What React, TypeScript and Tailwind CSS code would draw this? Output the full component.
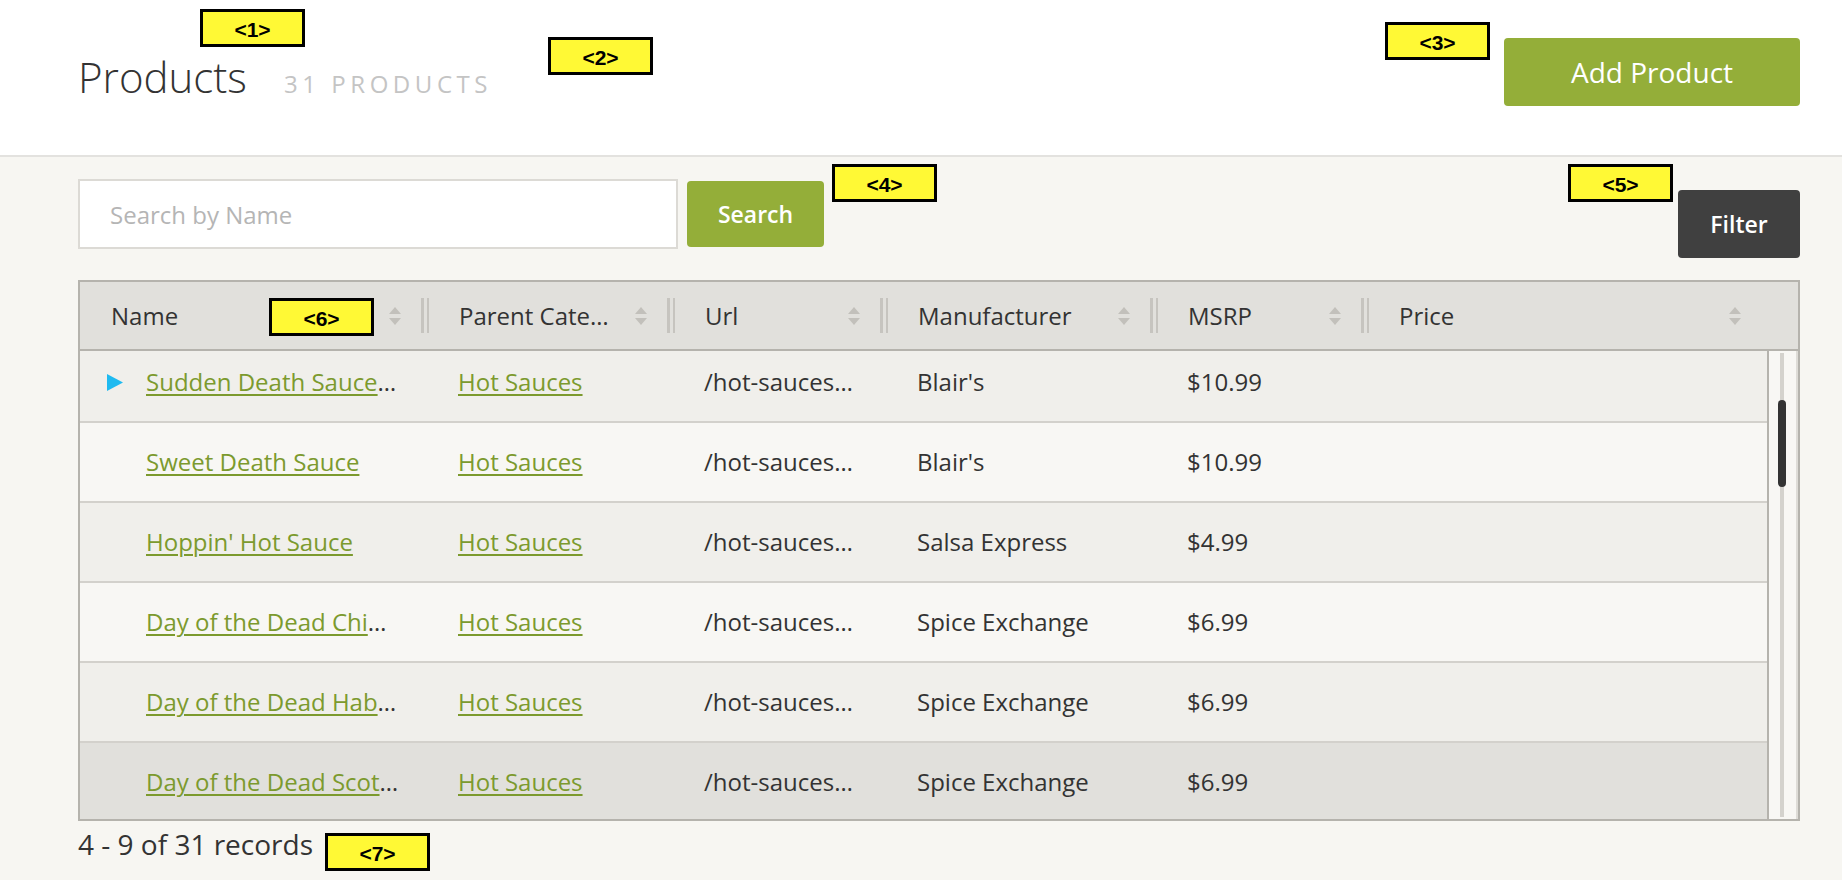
import React from 'react';

interface Product {
  name: string;
  category: string;
  url: string;
  manufacturer: string;
  msrp: string;
  price: string;
}

const products: Product[] = [
  { name: 'Sudden Death Sauce - Limited Batch', category: 'Hot Sauces', url: '/hot-sauces/sudden-death-sauce', manufacturer: "Blair's", msrp: '$10.99', price: '' },
  { name: 'Sweet Death Sauce', category: 'Hot Sauces', url: '/hot-sauces/sweet-death-sauce', manufacturer: "Blair's", msrp: '$10.99', price: '' },
  { name: "Hoppin' Hot Sauce", category: 'Hot Sauces', url: '/hot-sauces/hoppin-hot-sauce', manufacturer: 'Salsa Express', msrp: '$4.99', price: '' },
  { name: 'Day of the Dead Chipotle Hot Sauce', category: 'Hot Sauces', url: '/hot-sauces/day-of-the-dead-chipotle', manufacturer: 'Spice Exchange', msrp: '$6.99', price: '' },
  { name: 'Day of the Dead Habanero Hot Sauce', category: 'Hot Sauces', url: '/hot-sauces/day-of-the-dead-habanero', manufacturer: 'Spice Exchange', msrp: '$6.99', price: '' },
  { name: 'Day of the Dead Scotch Bonnet Hot Sauce', category: 'Hot Sauces', url: '/hot-sauces/day-of-the-dead-scotch-bonnet', manufacturer: 'Spice Exchange', msrp: '$6.99', price: '' },
];

const columns = ['Name', 'Parent Category', 'Url', 'Manufacturer', 'MSRP', 'Price'];

const SortIcon = () => (
  <svg width="12" height="18" viewBox="0 0 12 18" className="shrink-0">
    <polygon points="6,0 12,7 0,7" fill="#c2c0bb" />
    <polygon points="0,11 12,11 6,18" fill="#c2c0bb" />
  </svg>
);

const Separator = () => (
  <div className="flex h-[35px] w-[8px] shrink-0 gap-[3px]">
    <div className="h-full w-[3px] bg-[#c6c4bf]" />
    <div className="h-full w-[2px] bg-[#c6c4bf]" />
  </div>
);

const Marker = ({ n, className }: { n: number; className: string }) => (
  <div
    className={`absolute flex h-[38px] w-[105px] items-center justify-center border-[3px] border-black bg-[#fff935] pt-[3px] font-['Liberation_Sans',sans-serif] text-[21px] font-bold text-black ${className}`}
  >
    {`<${n}>`}
  </div>
);

const App: React.FC = () => {
  return (
    <div className="relative min-h-screen bg-[#f7f6f2] font-['Open_Sans',sans-serif] text-[#333]">
      {/* page header */}
      <div className="flex h-[157px] items-start justify-between border-b-2 border-[#e3e2df] bg-white pl-[78px] pr-[42px]">
        <div className="flex items-baseline gap-[37px] pt-[56px] leading-none">
          <h1 className="text-[42px] font-light leading-none text-[#333]">Products</h1>
          <span className="text-[24px] leading-none tracking-[0.19em] text-[#c4c4c4]">31 PRODUCTS</span>
        </div>
        <button className="mt-[38px] h-[68px] w-[296px] rounded-[4px] bg-[#94ae39] text-[28px] text-white">
          Add Product
        </button>
      </div>

      <div className="pl-[78px] pr-[42px]">
        {/* toolbar */}
        <div className="flex items-start justify-between pt-[22px]">
          <div className="flex items-center gap-[9px]">
            <input
              placeholder="Search by Name"
              className="h-[70px] w-[600px] border-2 border-[#dcdad5] bg-white px-[30px] text-[24px] text-[#333] outline-none placeholder:text-[#b5b5b5]"
            />
            <button className="h-[66px] w-[137px] rounded-[4px] bg-[#94ae39] text-[23px] font-semibold text-white">
              Search
            </button>
          </div>
          <button className="mt-[11px] h-[68px] w-[122px] rounded-[4px] bg-[#404040] text-[23px] font-semibold text-white">
            Filter
          </button>
        </div>

        {/* grid */}
        <div className="mt-[22px] border-2 border-[#b5b3ad]">
          <div className="grid h-[69px] grid-cols-[341px_246px_213px_270px_211px_1fr_31px] items-center border-b-2 border-[#b5b3ad] bg-[#e1e0dc] text-[24px]">
            {columns.map((c, i) => (
              <div key={c} className="flex min-w-0 items-center">
                {i > 0 && <Separator />}
                <div className={`min-w-0 flex-1 truncate ${i === 0 ? 'pl-[31px]' : 'pl-[30px]'}`}>{c}</div>
                <div className={`ml-[20px] ${i === 5 ? 'mr-[26px]' : 'mr-[20px]'}`}>
                  <SortIcon />
                </div>
              </div>
            ))}
            <div />
          </div>

          <div className="flex h-[468px]">
            <div className="min-w-0 flex-1 overflow-hidden">
              <div className="-mt-[8px]">
                {products.map((p, i) => (
                  <div
                    key={p.name}
                    className={`grid h-[80px] grid-cols-[341px_246px_213px_270px_211px_1fr] items-center border-b-2 border-[#d3d1cc] text-[24px] ${
                      i === 5 ? 'bg-[#e1e0dc]' : i % 2 === 0 ? 'bg-[#f0efeb]' : 'bg-[#f8f7f4]'
                    }`}
                  >
                    <div className="flex min-w-0 items-center pl-[27px] pr-[21px]">
                      <div className="w-[16px] shrink-0">
                        {i === 0 && (
                          <svg width="16" height="17" viewBox="0 0 16 17">
                            <polygon points="0,0 16,8.5 0,17" fill="#1fbaf0" />
                          </svg>
                        )}
                      </div>
                      <div className="ml-[23px] min-w-0 flex-1 truncate">
                        <a href="#" className="text-[#7c9a2e] underline decoration-2 underline-offset-[3px]">
                          {p.name}
                        </a>
                      </div>
                    </div>
                    <div className="min-w-0 truncate pl-[37px] pr-[22px]">
                      <a href="#" className="text-[#7c9a2e] underline decoration-2 underline-offset-[3px]">
                        {p.category}
                      </a>
                    </div>
                    <div className="min-w-0 truncate pl-[37px] pr-[22px]">{p.url}</div>
                    <div className="min-w-0 truncate pl-[37px] pr-[22px]">{p.manufacturer}</div>
                    <div className="min-w-0 truncate pl-[37px] pr-[22px]">{p.msrp}</div>
                    <div className="min-w-0 truncate pl-[37px] pr-[22px]">{p.price}</div>
                  </div>
                ))}
              </div>
            </div>
            {/* scrollbar */}
            <div className="relative w-[31px] shrink-0 border-l-2 border-r-2 border-l-[#b5b3ad] border-r-[#dedcd7] bg-[#f8f7f4]">
              <div className="absolute bottom-[2px] left-[11px] top-[2px] w-[4px] bg-[#d4d2cd]" />
              <div className="absolute left-[9px] top-[49px] h-[87px] w-[8px] rounded-full bg-[#333]" />
            </div>
          </div>
        </div>

        <div className="mt-[9px] text-[28px] leading-none text-[#333]">4 - 9 of 31 records</div>
      </div>

      <Marker n={1} className="left-[200px] top-[9px]" />
      <Marker n={2} className="left-[548px] top-[37px]" />
      <Marker n={3} className="left-[1385px] top-[22px]" />
      <Marker n={4} className="left-[832px] top-[164px]" />
      <Marker n={5} className="left-[1568px] top-[164px]" />
      <Marker n={6} className="left-[269px] top-[298px]" />
      <Marker n={7} className="left-[325px] top-[833px]" />
    </div>
  );
};

export default App;
